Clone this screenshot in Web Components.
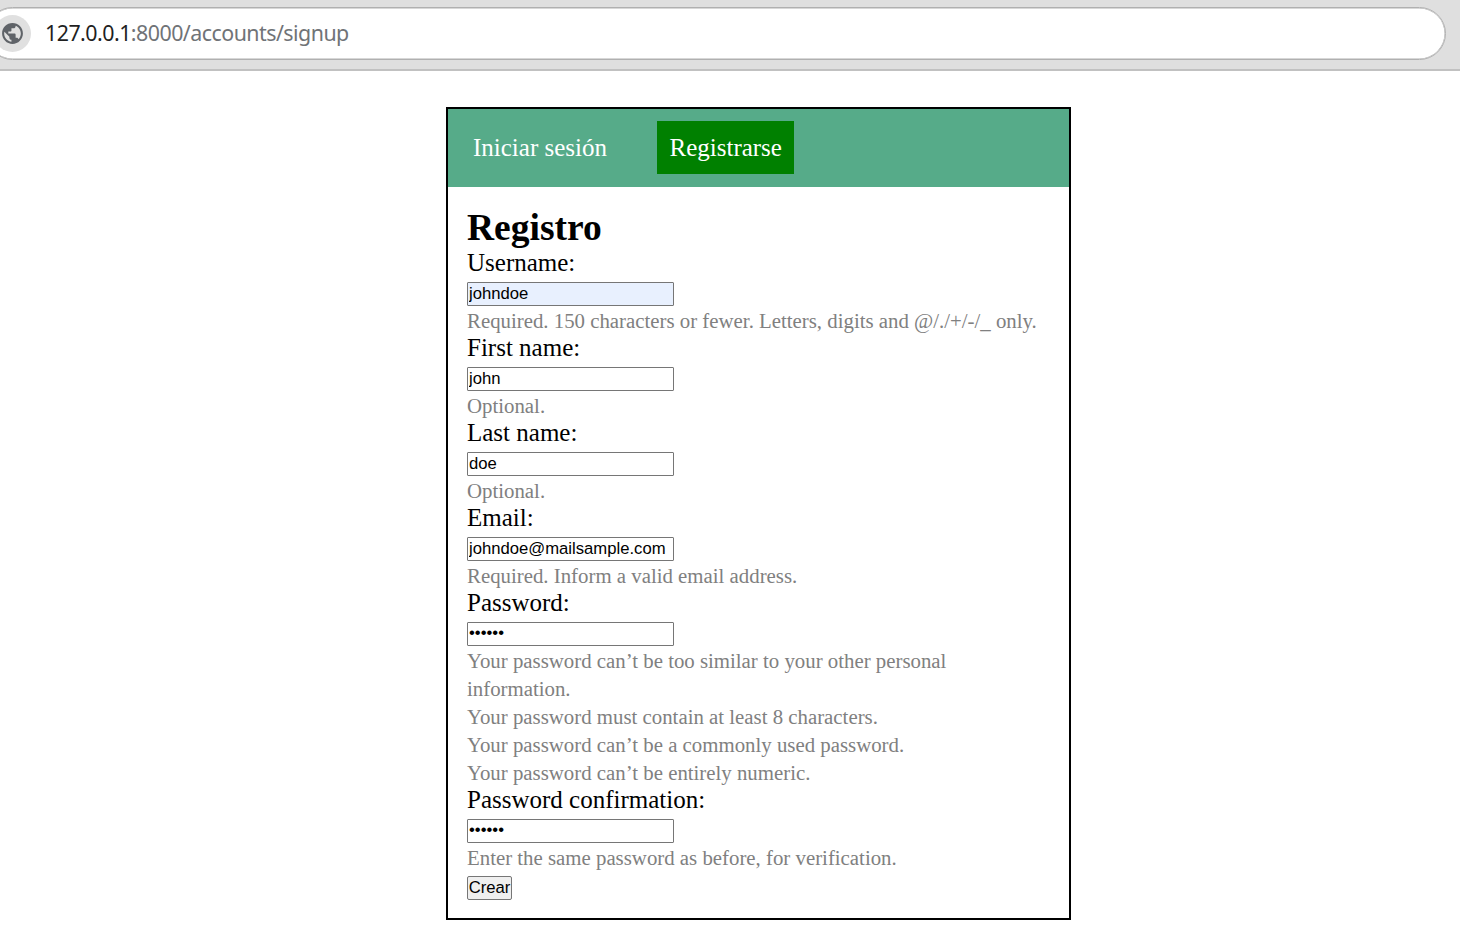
<!DOCTYPE html>
<html lang="es">
<head>
<meta charset="utf-8">
<title>Registro</title>
<style>
body { margin: 0; background: #fff; font-family: "Liberation Serif", "Times New Roman", serif; font-size: 25px; color: #000; }
</style>
</head>
<body>
<address-bar><span slot="host">127.0.0.1</span><span slot="path">:8000/accounts/signup</span></address-bar>
<signup-card>
  <nav-bar slot="nav">
    <nav-link>Iniciar sesión</nav-link>
    <nav-link active>Registrarse</nav-link>
  </nav-bar>
  <span slot="title">Registro</span>
  <form-field label="Username:" value="johndoe" filled><help-line>Required. 150 characters or fewer. Letters, digits and @/./+/-/_ only.</help-line></form-field>
  <form-field label="First name:" value="john"><help-line>Optional.</help-line></form-field>
  <form-field label="Last name:" value="doe"><help-line>Optional.</help-line></form-field>
  <form-field label="Email:" value="johndoe@mailsample.com"><help-line>Required. Inform a valid email address.</help-line></form-field>
  <form-field label="Password:" type="password" value="secret">
    <help-line>Your password can’t be too similar to your other personal information.</help-line>
    <help-line>Your password must contain at least 8 characters.</help-line>
    <help-line>Your password can’t be a commonly used password.</help-line>
    <help-line>Your password can’t be entirely numeric.</help-line>
  </form-field>
  <form-field label="Password confirmation:" type="password" value="secret"><help-line>Enter the same password as before, for verification.</help-line></form-field>
  <submit-button>Crear</submit-button>
</signup-card>
<script>
function define(name, html, setup) {
  const template = document.createElement('template');
  template.innerHTML = html;
  customElements.define(name, class extends HTMLElement {
    constructor() {
      super();
      this.attachShadow({ mode: 'open' }).append(template.content.cloneNode(true));
    }
    connectedCallback() { if (setup) setup(this, this.shadowRoot); }
  });
}

define('address-bar', `
<style>
:host { display: block; box-sizing: border-box; height: 71px; padding: 7px 14px 0 0; background: #dfdfdf; border-bottom: 2px solid #c1c1c1; overflow: hidden; }
.field { box-sizing: border-box; height: 53px; margin-left: -14px; padding-left: 7px; border: 1px solid #b0b0b0; box-shadow: inset 0 0 0 0.5px #b0b0b0; border-radius: 27px; background: #fff; display: flex; align-items: center; }
.site { width: 37px; height: 37px; border-radius: 50%; background: #e0e0e0; display: flex; align-items: center; justify-content: center; flex: none; }
svg { width: 25px; height: 25px; fill: #5f6368; display: block; }
.url { margin: -2px 0 0 14px; font: 21.4px/30px "Noto Sans", sans-serif; letter-spacing: -0.53px; color: #707377; white-space: nowrap; }
.host { color: #1f1f1f; }
</style>
<div class="field">
  <div class="site"><svg viewBox="0 0 24 24"><path d="M12 2C6.48 2 2 6.48 2 12s4.48 10 10 10 10-4.48 10-10S17.52 2 12 2zM4 12c0-.61.08-1.21.21-1.78L8.99 15v1c0 1.1.9 2 2 2v1.93C7.06 19.43 4 16.07 4 12zm13.89 5.4c-.26-.81-1-1.4-1.9-1.4h-1v-3c0-.55-.45-1-1-1h-6v-2h2c.55 0 1-.45 1-1V7h2c1.1 0 2-.9 2-2v-.41C17.92 5.77 20 8.65 20 12c0 2.08-.81 3.98-2.11 5.4z"/></svg></div>
  <div class="url"><span class="host"><slot name="host"></slot></span><slot name="path"></slot></div>
</div>`);

define('signup-card', `
<style>
:host { display: block; box-sizing: border-box; width: 625px; height: 813px; margin: 36px 0 0 446px; border: 2px solid #000; background: #fff; }
main { padding: 19px; }
h1 { margin: 0; font-size: 37.5px; line-height: 43px; font-weight: bold; }
</style>
<slot name="nav"></slot>
<main><h1><slot name="title"></slot></h1><slot></slot></main>`);

define('nav-bar', `
<style>:host { display: flex; box-sizing: border-box; height: 78px; padding: 12px 13px 13px; gap: 38px; background: #56ab89; }</style><slot></slot>`);

define('nav-link', `
<style>
:host { display: block; box-sizing: border-box; padding: 0 12px; line-height: 53px; color: #fff; white-space: nowrap; }
:host([active]) { background: #008000; padding: 0 12.5px; }
</style><slot></slot>`);

define('form-field', `
<style>
:host { display: block; }
label { display: block; line-height: 28px; }
input { display: block; box-sizing: border-box; width: 207px; height: 24px; margin: 5px 0 0; padding: 0 1px; border: 1px solid #767676; border-radius: 1px; background: #fff; color: #000; font: 16.667px "Liberation Sans", Arial, sans-serif; }
input[type=password] { padding-bottom: 2px; }
:host([filled]) input { background: #e8f0fe; }
.help { padding-top: 1px; margin-bottom: -1px; }
</style>
<label></label><input><div class="help"><slot></slot></div>`, (host, root) => {
  root.querySelector('label').textContent = host.getAttribute('label');
  const input = root.querySelector('input');
  input.type = host.getAttribute('type') || 'text';
  input.value = host.getAttribute('value');
});

define('help-line', `
<style>:host { display: block; font-size: 20.833px; line-height: 28px; color: #808080; }</style><slot></slot>`);

define('submit-button', `
<style>
:host { display: block; padding-top: 5px; }
button { display: block; box-sizing: border-box; width: 45px; height: 24px; margin: 0; padding: 0; border: 1px solid #767676; border-radius: 2px; background: #efefef; color: #000; font: 16.667px/22px "Liberation Sans", Arial, sans-serif; }
</style><button><slot></slot></button>`);
</script>
</body>
</html>
